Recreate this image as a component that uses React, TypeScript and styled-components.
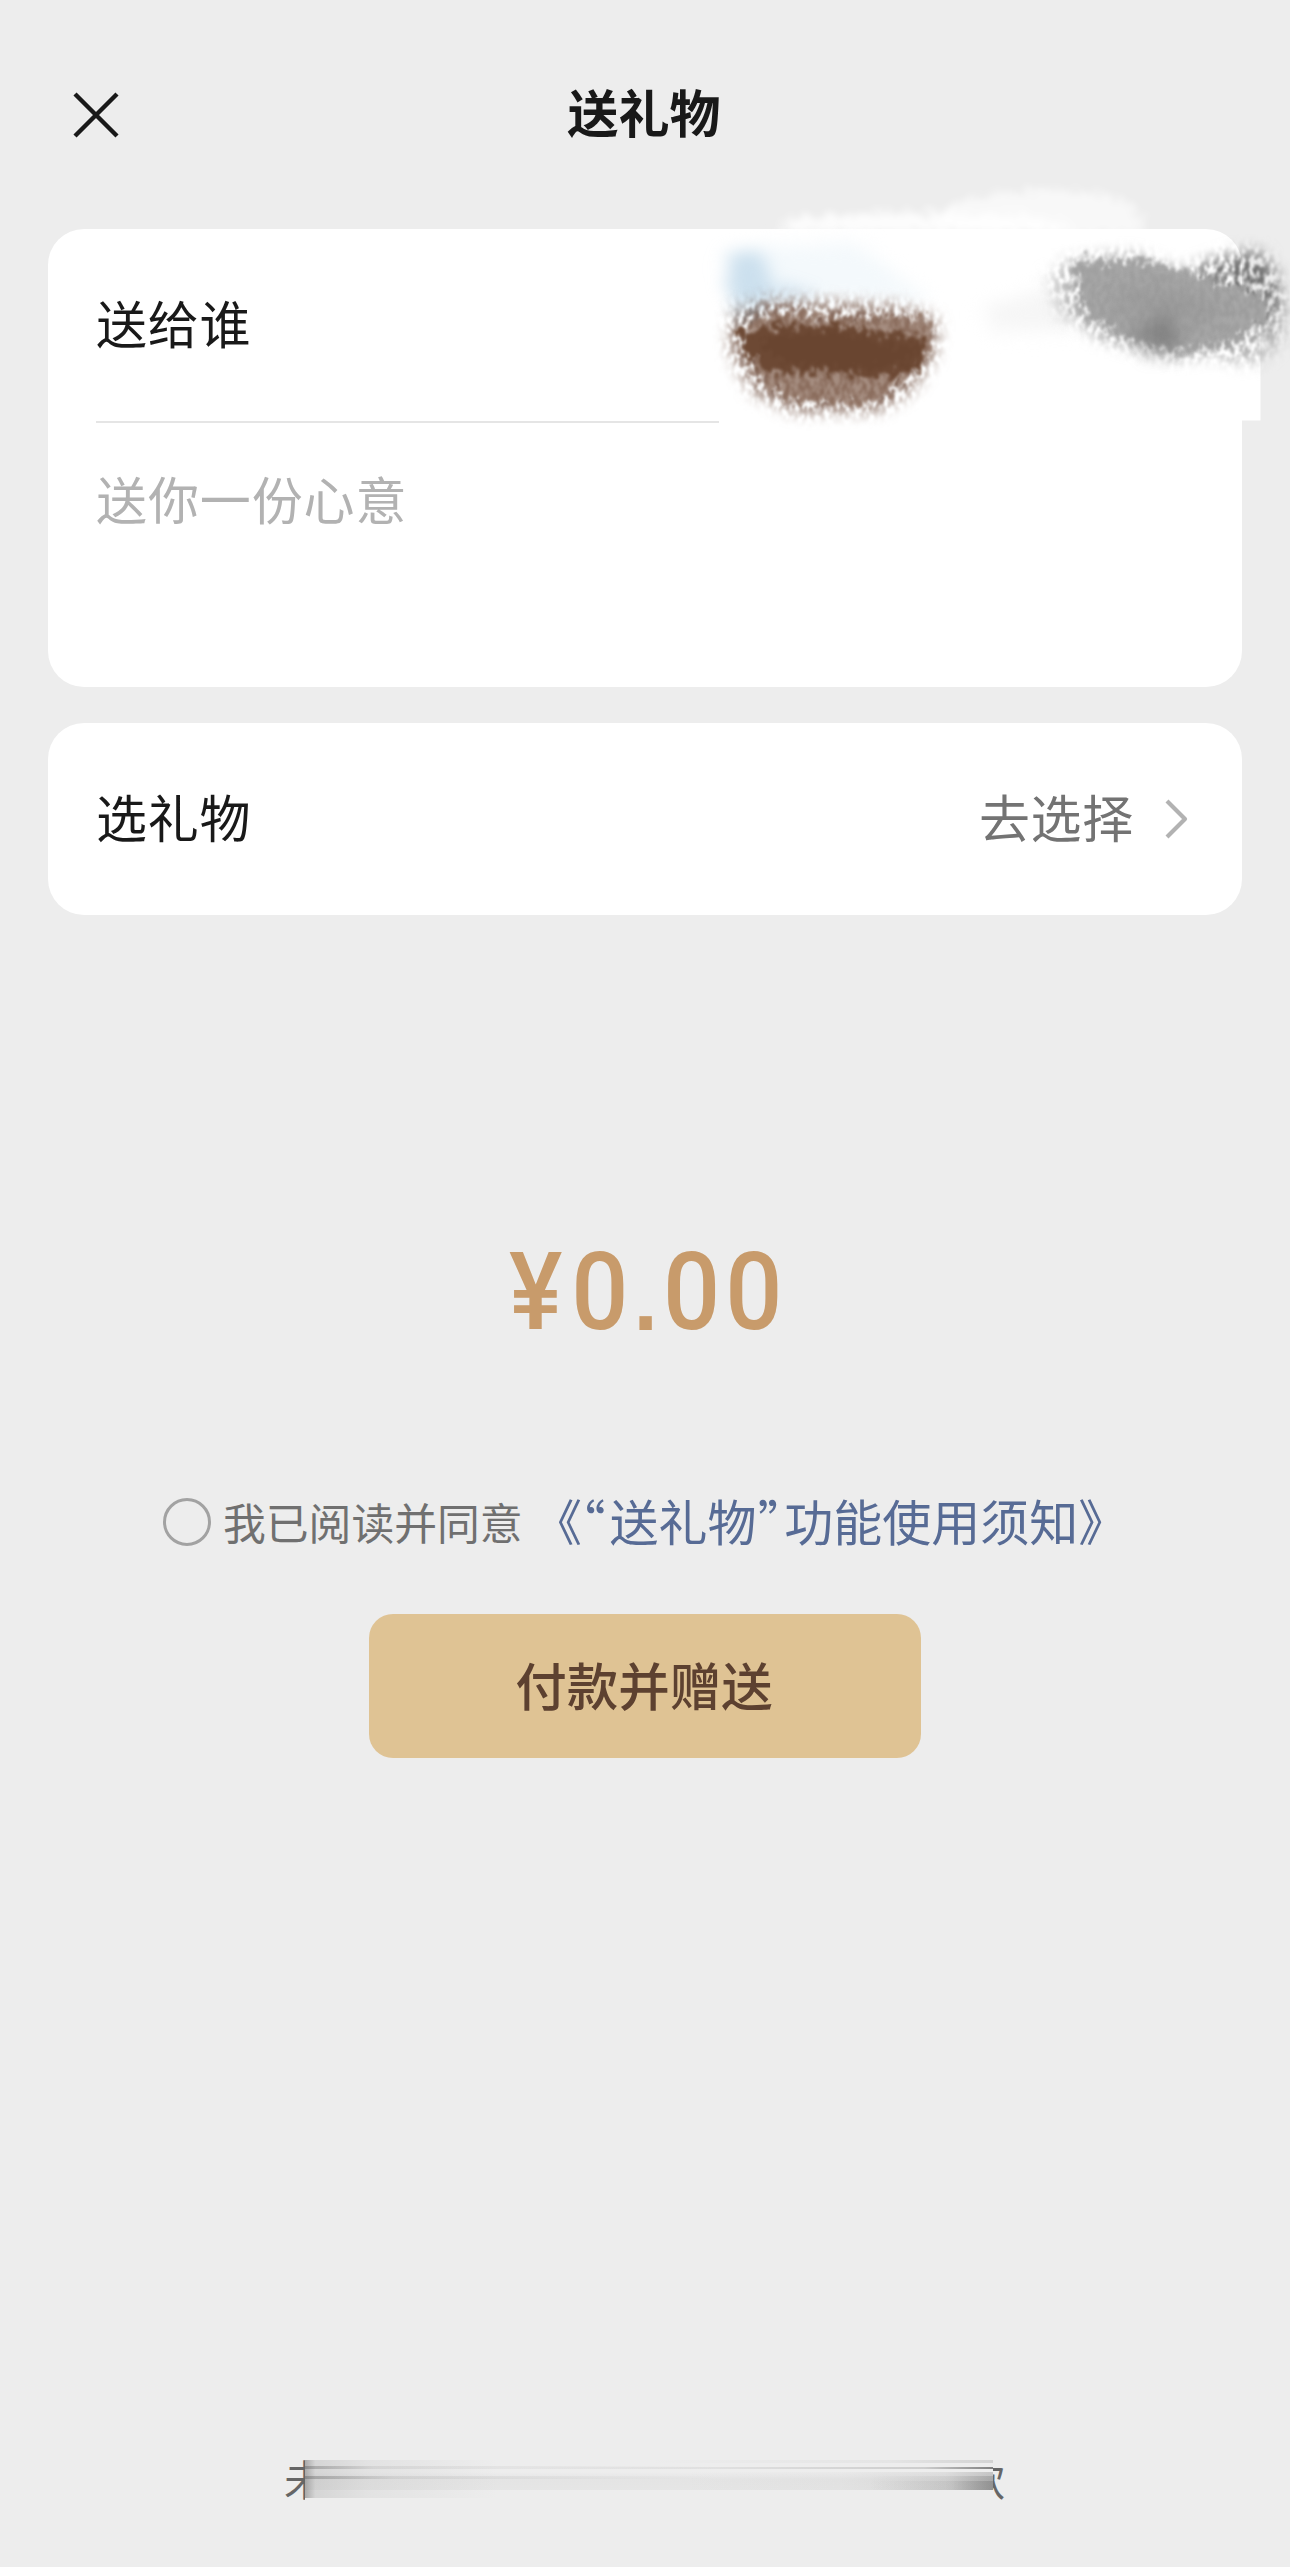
import React from "react";
import styled, { createGlobalStyle } from "styled-components";

const GlobalStyle = createGlobalStyle`
  * { box-sizing: border-box; }
  body { margin: 0; background: #ededed; }
`;

const Page = styled.div`
  position: relative;
  display: flex;
  flex-direction: column;
  width: 1290px;
  height: 2567px;
  overflow: hidden;
  background: #ededed;
  color: #191919;
  font-family: "Noto Sans CJK SC", sans-serif;
  font-size: 51px;
  letter-spacing: 0.7px;
  line-height: 1;
  white-space: nowrap;
`;

const Header = styled.header`
  display: grid;
  grid-template-columns: 192px 1fr 192px;
  align-items: center;
  height: 229px;
`;

const CloseButton = styled.button`
  display: flex;
  justify-content: center;
  padding: 0;
  border: 0;
  background: none;
`;

const Title = styled.h1`
  margin: 0;
  padding: 0 2px 6px 0;
  font-size: 51px;
  font-weight: 700;
  letter-spacing: 0;
  text-align: center;
`;

const Cards = styled.main`
  display: flex;
  flex-direction: column;
  gap: 36px;
  padding: 0 48px;
`;

const Card = styled.section<{ $height: number }>`
  display: flex;
  flex-direction: column;
  height: ${(p) => p.$height}px;
  padding: 0 48px;
  border-radius: 36px;
  background: #fff;
`;

const Row = styled.div`
  display: flex;
  align-items: center;
  justify-content: space-between;
  height: 192px;
`;

const Label = styled.span`
  padding-bottom: 6px;
`;

const Divider = styled.div`
  width: 623px;
  height: 2px;
  background: #e5e5e5;
`;

const Wish = styled.div`
  padding-top: 50px;
  letter-spacing: 0.9px;
  color: #b2b2b2;
`;

const Choose = styled.div`
  display: flex;
  align-items: center;
  gap: 31px;
  padding-right: 5px;
  color: #737373;
`;

const Price = styled.div`
  display: flex;
  justify-content: center;
  margin-top: 315px;
  padding-left: 7px;
  height: 125px;
  line-height: 125px;
  font-family: Roboto, sans-serif;
  font-size: 107px;
  font-weight: 500;
  letter-spacing: 5.4px;
  color: #c89b6b;
  transform: scaleX(0.94);
`;

const Currency = styled.span`
  margin-right: 4px;
`;

const Point = styled.span`
  padding-top: 6px;
  font-family: "Liberation Sans", sans-serif;
  font-size: 93px;
  font-weight: 700;
`;

const Agreement = styled.div`
  display: flex;
  align-items: center;
  height: 60px;
  margin-top: 137px;
  padding-left: 163px;
  letter-spacing: 0;
`;

const Radio = styled.span`
  width: 48px;
  height: 48px;
  border: 3px solid #a2a2a2;
  border-radius: 50%;
`;

const AgreeText = styled.span`
  margin-left: 12px;
  padding-bottom: 2px;
  font-size: 42.8px;
  color: #707070;
`;

const Link = styled.a`
  margin-left: 35px;
  padding-bottom: 6px;
  font-size: 49px;
  color: #576b95;
  font-feature-settings: "halt";
`;

const Quote = styled.span<{ $before: number; $after: number }>`
  margin: 0 ${(p) => p.$after}px 0 ${(p) => p.$before}px;
`;

const PayButton = styled.button`
  align-self: center;
  width: 552px;
  height: 144px;
  margin-top: 62px;
  padding: 0 2px 6px 0;
  border: 0;
  border-radius: 24px;
  background: #dfc394;
  color: #5d4130;
  font: 500 51.5px "Noto Sans CJK SC", sans-serif;
`;

const Footer = styled.footer`
  position: relative;
  display: flex;
  justify-content: space-between;
  width: 721px;
  margin: auto 0 66px 284px;
  height: 44px;
  font-size: 42px;
  letter-spacing: 0;
  color: #666;
`;

/* Wiped strip lying over the middle of the footer sentence. */
const Smear = styled.div`
  position: absolute;
  left: 21px;
  top: 0;
  width: 688px;
  height: 48px;
  background:
    linear-gradient(90deg, rgba(80,80,80,.35), rgba(110,110,110,.12) 10%, transparent 60%) 0 9px / 100% 3px no-repeat,
    linear-gradient(90deg, rgba(80,80,80,.35), rgba(110,110,110,.12) 13%, transparent 60%) 0 19px / 100% 3px no-repeat,
    linear-gradient(270deg, rgba(70,70,70,.65), rgba(110,110,110,.25) 10%, rgba(110,110,110,.1) 40%, transparent 70%) 0 10px / 100% 2px no-repeat,
    linear-gradient(270deg, rgba(120,120,120,.22), rgba(120,120,120,.07) 15%, transparent 50%) 0 3px / 100% 3px no-repeat,
    linear-gradient(90deg, rgba(70,70,70,.4), rgba(130,130,130,.22) 1.5%, rgba(150,150,150,.12) 9%, transparent 28%) 0 3px / 100% 38px no-repeat,
    linear-gradient(270deg, rgba(80,80,80,.25), rgba(120,120,120,.12) 7%, rgba(150,150,150,.04) 22%, transparent 45%) 0 15px / 100% 18px no-repeat,
    linear-gradient(270deg, rgba(80,80,80,.22), rgba(120,120,120,.1) 6%, transparent 18%) 0 19px / 100% 14px no-repeat,
    linear-gradient(270deg, rgba(80,80,80,.25), rgba(120,120,120,.1) 6%, transparent 18%) 0 24px / 100% 9px no-repeat,
    linear-gradient(180deg, transparent, rgba(110,110,110,.07) 40%, rgba(110,110,110,.06)) 0 15px / 100% 18px no-repeat,
    #ededed;
`;

const Brush = styled.svg`
  position: absolute;
  left: 680px;
  top: 180px;
`;

const CloseIcon = () => (
  <svg width="48" height="48" viewBox="0 0 48 48" fill="none" stroke="#191919" strokeWidth="4.4">
    <path d="M3 3 45 45M45 3 3 45" />
  </svg>
);

const Chevron = () => (
  <svg width="24" height="40" viewBox="0 0 24 40" fill="none" stroke="#b2b2b2" strokeWidth="4.2">
    <path d="M2 2 20 20 2 38" strokeLinejoin="round" />
  </svg>
);

const BrushMarks = () => (
  <Brush width="610" height="290" viewBox="680 180 610 290" aria-hidden="true">
    <defs>
      <filter id="rough" x="-20%" y="-30%" width="140%" height="160%" colorInterpolationFilters="sRGB">
        <feTurbulence type="fractalNoise" baseFrequency="0.18 0.11" numOctaves="3" seed="4" result="n" />
        <feDisplacementMap in="SourceGraphic" in2="n" scale="30" xChannelSelector="R" yChannelSelector="G" />
        <feGaussianBlur stdDeviation="1.5" />
      </filter>
      <filter id="grain" x="-20%" y="-30%" width="140%" height="160%" colorInterpolationFilters="sRGB">
        <feGaussianBlur in="SourceGraphic" stdDeviation="8" result="b" />
        <feTurbulence type="fractalNoise" baseFrequency="0.2 0.12" numOctaves="3" seed="9" />
        <feColorMatrix values="0 0 0 0 0  0 0 0 0 0  0 0 0 0 0  3.4 0 0 0 -1.15" result="m" />
        <feComposite in="b" in2="m" operator="in" />
        <feGaussianBlur stdDeviation="1.2" />
      </filter>
      <filter id="haze" x="-20%" y="-40%" width="140%" height="180%" colorInterpolationFilters="sRGB">
        <feTurbulence type="fractalNoise" baseFrequency="0.16" numOctaves="3" seed="7" result="n" />
        <feDisplacementMap in="SourceGraphic" in2="n" scale="30" xChannelSelector="R" yChannelSelector="G" />
        <feGaussianBlur stdDeviation="3.5" />
      </filter>
      <filter id="tint" x="-40%" y="-50%" width="180%" height="200%" colorInterpolationFilters="sRGB">
        <feTurbulence type="fractalNoise" baseFrequency="0.1" numOctaves="3" seed="3" result="n" />
        <feDisplacementMap in="SourceGraphic" in2="n" scale="34" xChannelSelector="R" yChannelSelector="G" />
        <feGaussianBlur stdDeviation="8" />
      </filter>
    </defs>

    <path d="M1200 300H1260.5V420.5H1200Z" fill="#fff" />

    <g filter="url(#haze)" fill="#fff">
      <path d="M776 232Q784 216 850 215L950 213 1030 216 1090 234Z" opacity=".85" />
      <path d="M940 214Q955 194 1040 190 1110 190 1130 204L1150 234H940Z" opacity=".62" />
    </g>

    <g filter="url(#tint)">
      <path d="M732 256Q760 244 800 242L860 246 930 300 740 306Z" fill="#eff6fb" opacity=".7" />
      <path d="M724 258Q746 246 764 260L774 286 820 294 748 306 726 296Z" fill="#bfd8ea" opacity=".75" />
      <path d="M980 312 1060 284 1080 320 1062 334 990 328Z" fill="#eeeeee" opacity=".5" />
    </g>

    <g filter="url(#grain)">
      <path d="M732 316 760 300 900 306 938 320 934 356 912 390 880 410 795 412 752 392 730 350Z" fill="#6d4c3c" opacity=".88" />
      <path d="M734 304 766 306 756 326 732 320Z" fill="#69727a" opacity=".55" />
    </g>
    <g filter="url(#rough)">
      <path d="M746 322 784 312 820 318 930 317 932 350 896 386 870 404 790 400 758 380Z" fill="#8f7160" opacity=".8" />
      <path d="M738 332Q780 322 837 326L890 334 926 338 920 368 878 378 830 371 775 373 748 358Z" fill="#6d4934" />
      <path d="M755 338 835 332 900 345 918 346 914 360 875 369 782 364Z" fill="#694530" />
    </g>

    <g filter="url(#grain)">
      <path d="M1190 268 1230 254 1262 252 1278 276 1284 312 1266 334 1225 324 1204 290Z" fill="#707070" />
      <path d="M1063 262 1130 254 1186 272 1275 302 1278 324 1240 352 1170 358 1100 338 1064 310Z" fill="#858585" opacity=".85" />
      <path d="M1045 275 1075 272 1090 328 1062 317Z" fill="#bbb" opacity=".7" />
      <path d="M1235 324 1280 318 1286 336 1256 364 1218 358Z" fill="#a5a5a5" opacity=".8" />
    </g>
    <g filter="url(#rough)">
      <path d="M1074 260 1142 262 1190 272 1254 294 1272 304 1264 320 1228 344 1175 352 1128 338 1085 316Z" fill="#a0a0a0" opacity=".92" />
    </g>
    <g filter="url(#tint)">
      <path d="M1100 296 1160 286 1220 308 1205 322 1160 322 1115 312Z" fill="#8e8e8e" opacity=".4" />
      <path d="M1130 332 1165 318 1184 336 1178 352 1155 350Z" fill="#707070" opacity=".7" />
    </g>
  </Brush>
);

export default function App() {
  return (
    <Page>
      <GlobalStyle />
      <Header>
        <CloseButton aria-label="关闭"><CloseIcon /></CloseButton>
        <Title>送礼物</Title>
      </Header>
      <Cards>
        <Card $height={458}>
          <Row><Label>送给谁</Label></Row>
          <Divider />
          <Wish>送你一份心意</Wish>
        </Card>
        <Card $height={192}>
          <Row>
            <Label>选礼物</Label>
            <Choose><Label>去选择</Label><Chevron /></Choose>
          </Row>
        </Card>
      </Cards>
      <Price>
        <Currency>¥</Currency>
        <span>0</span>
        <Point>.</Point>
        <span>00</span>
      </Price>
      <Agreement>
        <Radio />
        <AgreeText>我已阅读并同意</AgreeText>
        <Link>
          《<Quote $before={-1} $after={4}>“</Quote>送礼物<Quote $before={1} $after={2}>”</Quote>功能使用须知》
        </Link>
      </Agreement>
      <PayButton>付款并赠送</PayButton>
      <Footer>
        <span>未</span>
        <span>款</span>
        <Smear />
      </Footer>
      <BrushMarks />
    </Page>
  );
}
